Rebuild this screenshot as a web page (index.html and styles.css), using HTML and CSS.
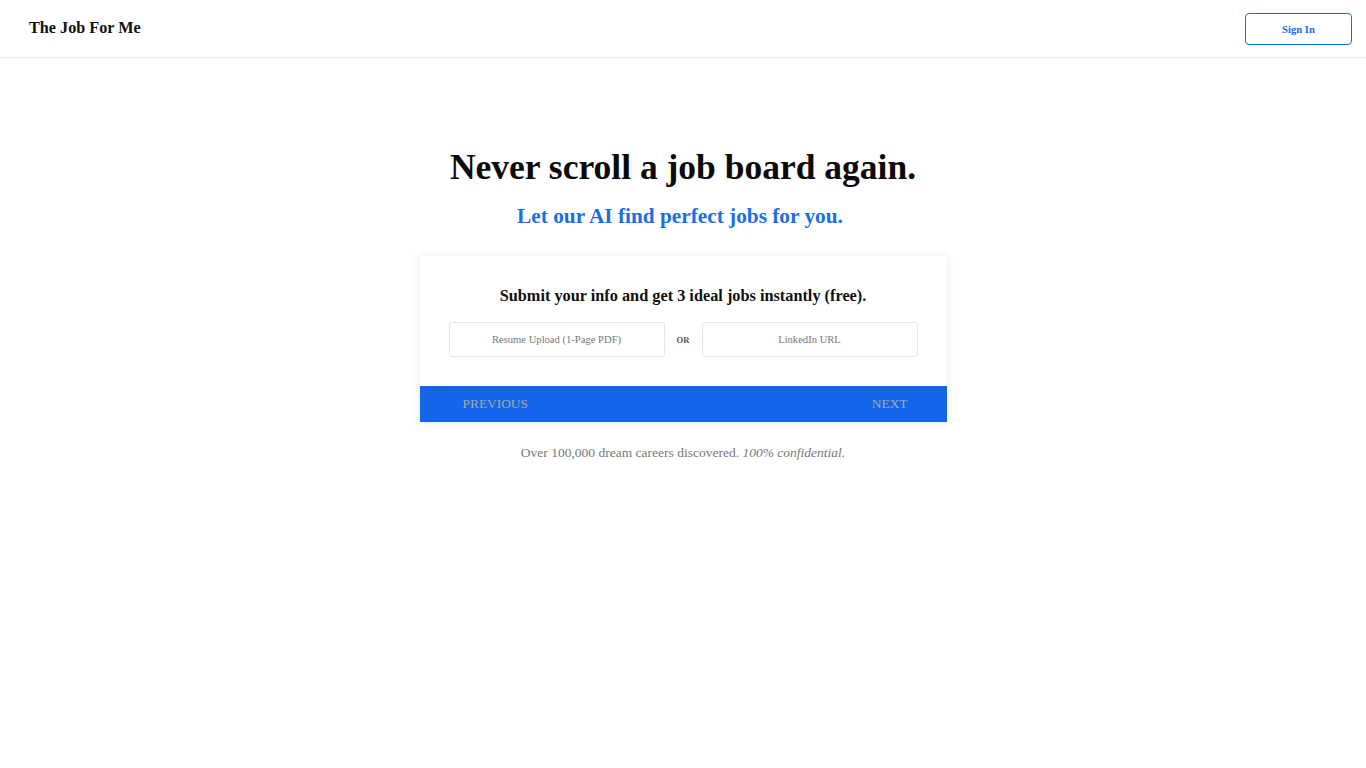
FILE: index.html
```html
<!DOCTYPE html>
<html lang="en">
<head>
<meta charset="utf-8">
<title>The Job For Me</title>
<link rel="stylesheet" href="styles.css">
</head>
<body>
<header class="topbar">
  <div class="logo">The Job For Me</div>
  <button class="signin">Sign In</button>
</header>
<main class="hero">
  <h1 class="headline">Never scroll a job board again.</h1>
  <h2 class="subline">Let our AI find perfect jobs for you.</h2>
  <section class="card">
    <h3 class="card-title">Submit your info and get 3 ideal jobs instantly (free).</h3>
    <div class="inputs">
      <div class="field">Resume Upload (1-Page PDF)</div>
      <div class="or">OR</div>
      <div class="field">LinkedIn URL</div>
    </div>
    <div class="navbar">
      <span class="nav-btn">PREVIOUS</span>
      <span class="nav-btn">NEXT</span>
    </div>
  </section>
  <p class="footnote">Over 100,000 dream careers discovered. <em>100% confidential.</em></p>
</main>
</body>
</html>
```
FILE: styles.css
```css
* { box-sizing: border-box; }
html, body { margin: 0; padding: 0; background: #fff; }
body { font-family: "Liberation Serif", "Times New Roman", serif; color: #111; }

.topbar {
  height: 58px;
  border-bottom: 1px solid #ededed;
  display: flex;
  align-items: center;
  justify-content: space-between;
  padding: 0 14px 0 29px;
}
.logo { font-size: 16.2px; font-weight: bold; color: #111; margin-top: -1px; }
.signin {
  width: 107px;
  height: 32px;
  border: 1px solid #1a6ae9;
  border-radius: 4px;
  background: #fff;
  color: #1a6ae9;
  font-family: "Liberation Serif", serif;
  font-weight: bold;
  font-size: 10.7px;
  padding: 0;
}

.hero { display: flex; flex-direction: column; align-items: center; padding-top: 89px; }
.headline { margin: 0; font-size: 35.5px; font-weight: bold; line-height: 41px; color: #0b0b0b; }
.subline { margin: 16px 6px 0 0; font-size: 21.3px; font-weight: bold; line-height: 25px; color: #1a6ee9; }

.card {
  margin-top: 27px;
  width: 527px;
  background: #fff;
  box-shadow: 0 1px 8px rgba(0,0,0,0.10);
  display: flex;
  flex-direction: column;
}
.card-title { margin: 30px 0 0; text-align: center; font-size: 16.3px; font-weight: bold; line-height: 20px; color: #111; }
.inputs { display: flex; align-items: center; padding: 16px 29px 0 29px; margin-bottom: 29px; }
.field {
  width: 216px;
  height: 35px;
  border: 1px solid #e6e6e6;
  border-radius: 3px;
  display: flex;
  align-items: center;
  justify-content: center;
  font-size: 10.6px;
  color: #777;
}
.or { width: 37px; text-align: center; font-size: 8.6px; font-weight: bold; color: #555; }
.navbar {
  height: 36px;
  background: #1366e9;
  display: flex;
  align-items: center;
  justify-content: space-between;
  padding: 0 39px 0 43px;
}
.nav-btn { color: #a9a9a9; font-size: 13.4px; }
.footnote { margin: 23px 0 0; font-size: 13.5px; line-height: 16px; color: #777; }
.footnote em { font-style: italic; }
```
